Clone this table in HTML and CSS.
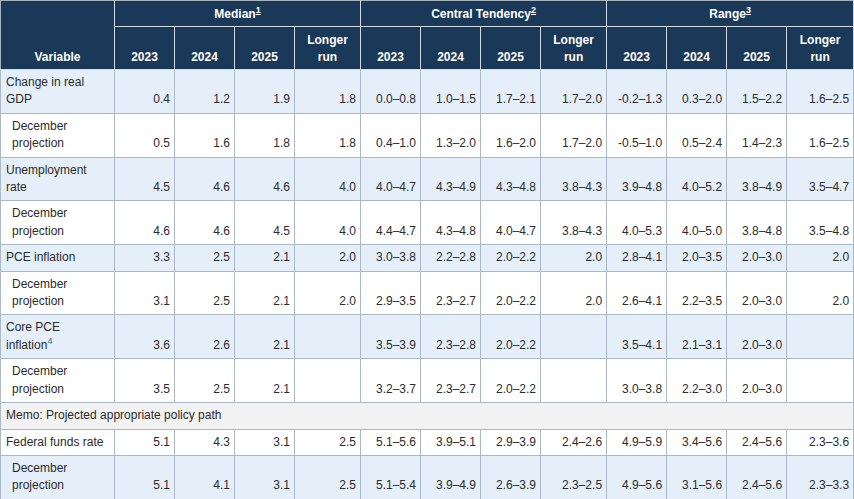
FILE: index.html
```html
<!DOCTYPE html>
<html lang="en">
<head>
<meta charset="utf-8">
<title>Economic projections</title>
<link rel="stylesheet" href="styles.css">
</head>
<body>
<table class="proj">
  <colgroup>
    <col class="c-var">
    <col class="c-yr"><col class="c-yr"><col class="c-yr"><col class="c-lr">
    <col class="c-yr"><col class="c-yr"><col class="c-yr"><col class="c-lr">
    <col class="c-yr"><col class="c-yr"><col class="c-yr"><col class="c-lr-last">
  </colgroup>
  <thead>
    <tr class="h1">
      <th rowspan="2" class="hvar">Variable</th>
      <th colspan="4" class="hgrp">Median<sup><a href="#n1">1</a></sup></th>
      <th colspan="4" class="hgrp">Central Tendency<sup><a href="#n2">2</a></sup></th>
      <th colspan="4" class="hgrp">Range<sup><a href="#n3">3</a></sup></th>
    </tr>
    <tr class="h2">
      <th>2023</th><th>2024</th><th>2025</th><th>Longer<br>run</th>
      <th>2023</th><th>2024</th><th>2025</th><th>Longer<br>run</th>
      <th>2023</th><th>2024</th><th>2025</th><th>Longer<br>run</th>
    </tr>
  </thead>
  <tbody>
    <tr class="alt">
      <td class="lbl">Change in real<br>GDP</td>
      <td>0.4</td><td>1.2</td><td>1.9</td><td>1.8</td>
      <td>0.0–0.8</td><td>1.0–1.5</td><td>1.7–2.1</td><td>1.7–2.0</td>
      <td>-0.2–1.3</td><td>0.3–2.0</td><td>1.5–2.2</td><td>1.6–2.5</td>
    </tr>
    <tr>
      <td class="lbl sub">December<br>projection</td>
      <td>0.5</td><td>1.6</td><td>1.8</td><td>1.8</td>
      <td>0.4–1.0</td><td>1.3–2.0</td><td>1.6–2.0</td><td>1.7–2.0</td>
      <td>-0.5–1.0</td><td>0.5–2.4</td><td>1.4–2.3</td><td>1.6–2.5</td>
    </tr>
    <tr class="alt">
      <td class="lbl">Unemployment<br>rate</td>
      <td>4.5</td><td>4.6</td><td>4.6</td><td>4.0</td>
      <td>4.0–4.7</td><td>4.3–4.9</td><td>4.3–4.8</td><td>3.8–4.3</td>
      <td>3.9–4.8</td><td>4.0–5.2</td><td>3.8–4.9</td><td>3.5–4.7</td>
    </tr>
    <tr>
      <td class="lbl sub">December<br>projection</td>
      <td>4.6</td><td>4.6</td><td>4.5</td><td>4.0</td>
      <td>4.4–4.7</td><td>4.3–4.8</td><td>4.0–4.7</td><td>3.8–4.3</td>
      <td>4.0–5.3</td><td>4.0–5.0</td><td>3.8–4.8</td><td>3.5–4.8</td>
    </tr>
    <tr class="alt">
      <td class="lbl">PCE inflation</td>
      <td>3.3</td><td>2.5</td><td>2.1</td><td>2.0</td>
      <td>3.0–3.8</td><td>2.2–2.8</td><td>2.0–2.2</td><td>2.0</td>
      <td>2.8–4.1</td><td>2.0–3.5</td><td>2.0–3.0</td><td>2.0</td>
    </tr>
    <tr>
      <td class="lbl sub">December<br>projection</td>
      <td>3.1</td><td>2.5</td><td>2.1</td><td>2.0</td>
      <td>2.9–3.5</td><td>2.3–2.7</td><td>2.0–2.2</td><td>2.0</td>
      <td>2.6–4.1</td><td>2.2–3.5</td><td>2.0–3.0</td><td>2.0</td>
    </tr>
    <tr class="alt">
      <td class="lbl">Core PCE<br>inflation<sup class="fn"><a href="#n4">4</a></sup></td>
      <td>3.6</td><td>2.6</td><td>2.1</td><td></td>
      <td>3.5–3.9</td><td>2.3–2.8</td><td>2.0–2.2</td><td></td>
      <td>3.5–4.1</td><td>2.1–3.1</td><td>2.0–3.0</td><td></td>
    </tr>
    <tr>
      <td class="lbl sub">December<br>projection</td>
      <td>3.5</td><td>2.5</td><td>2.1</td><td></td>
      <td>3.2–3.7</td><td>2.3–2.7</td><td>2.0–2.2</td><td></td>
      <td>3.0–3.8</td><td>2.2–3.0</td><td>2.0–3.0</td><td></td>
    </tr>
    <tr class="memo">
      <td colspan="13" class="lbl">Memo: Projected appropriate policy path</td>
    </tr>
    <tr>
      <td class="lbl">Federal funds rate</td>
      <td>5.1</td><td>4.3</td><td>3.1</td><td>2.5</td>
      <td>5.1–5.6</td><td>3.9–5.1</td><td>2.9–3.9</td><td>2.4–2.6</td>
      <td>4.9–5.9</td><td>3.4–5.6</td><td>2.4–5.6</td><td>2.3–3.6</td>
    </tr>
    <tr class="alt">
      <td class="lbl sub">December<br>projection</td>
      <td>5.1</td><td>4.1</td><td>3.1</td><td>2.5</td>
      <td>5.1–5.4</td><td>3.9–4.9</td><td>2.6–3.9</td><td>2.3–2.5</td>
      <td>4.9–5.6</td><td>3.1–5.6</td><td>2.4–5.6</td><td>2.3–3.3</td>
    </tr>
  </tbody>
</table>
</body>
</html>
```

FILE: styles.css
```css
html, body {
  margin: 0;
  padding: 0;
  background: #ffffff;
}

.proj {
  border-collapse: collapse;
  table-layout: fixed;
  width: 854px;
  font-family: "Liberation Sans", Arial, sans-serif;
  font-size: 12px;
  line-height: 17px;
  color: #2b2b2b;
}

.c-var { width: 114px; }
.c-yr { width: 60px; }
.c-lr { width: 66px; }
.c-lr-last { width: 67px; }

.proj th {
  background: #1a3857;
  color: #ffffff;
  font-weight: bold;
  text-align: center;
  vertical-align: bottom;
  border: 1px solid #d3dae2;
  padding: 4px 4px 3px 4px;
}

.proj .h1 th {
  border-top-color: #a9b3bd;
  height: 17px;
  padding: 5px 4px 3px 4px;
}

.proj .hvar {
  border-left-color: #a9b3bd;
}

.proj .h2 th {
  height: 34px;
  padding: 5px 4px 3px 4px;
}

.proj th sup {
  font-size: 9px;
  line-height: 0;
  vertical-align: 5px;
}

.proj th sup a {
  color: #ffffff;
  text-decoration: underline;
}

.proj td {
  border: 1px solid #aab8c7;
  padding: 4px 4px 4px 4px;
  line-height: 17.4px;
  text-align: right;
  vertical-align: bottom;
  white-space: nowrap;
}

.proj td.lbl {
  text-align: left;
  padding-left: 5px;
}

.proj td.sub {
  padding-left: 11px;
}

.proj tr.alt td {
  background: #e5eff9;
}

.proj tr.memo td {
  background: #f2f2f2;
}

.proj sup.fn {
  font-size: 9px;
  line-height: 0;
  vertical-align: 5px;
}

.proj sup.fn a {
  color: #3a6fa8;
  text-decoration: none;
}
```
